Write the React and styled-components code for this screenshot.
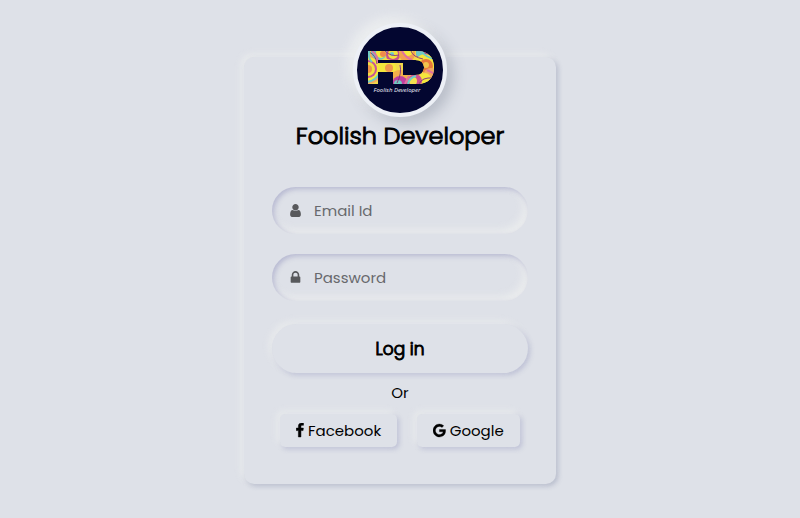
import styled, { createGlobalStyle, css } from "styled-components";

const GlobalStyle = createGlobalStyle`
  * {
    box-sizing: border-box;
  }
  body {
    margin: 0;
    background-color: #dee1e8;
    font-family: Poppins, Inter, sans-serif;
    font-size: 15px;
    color: #000;
  }
`;

const raised = css`
  box-shadow:
    -3px -3px 7px rgba(240, 242, 240, 0.6),
    2px 2px 5px rgba(110, 112, 170, 0.3);
`;

const heavy = css`
  font-weight: 300;
  -webkit-text-stroke: 1px currentColor;
`;

const Page = styled.main`
  display: flex;
  justify-content: center;
  padding: 57px 16px 34px;
`;

const Card = styled.form`
  display: flex;
  flex-direction: column;
  align-items: center;
  width: 100%;
  max-width: 312px;
  padding: 0 28px 37px;
  border-radius: 10px;
  box-shadow:
    -3px -3px 7px rgba(240, 242, 240, 0.6),
    2px 2px 5px rgba(94, 104, 140, 0.32);
`;

const Avatar = styled.div`
  width: 94px;
  height: 94px;
  margin-top: -34px;
  border: 4px solid #edf0f6;
  border-radius: 50%;
  overflow: hidden;
  background-color: #030630;
  box-shadow:
    -6px -6px 12px rgba(244, 245, 244, 0.7),
    6px 6px 14px rgba(94, 104, 121, 0.3);
  svg {
    display: block;
  }
`;

const Title = styled.h1`
  margin: 0 0 32px;
  font-size: 24px;
  line-height: 38px;
  white-space: nowrap;
  ${heavy}
`;

const Field = styled.label`
  display: flex;
  align-items: center;
  gap: 11px;
  width: 100%;
  height: 47px;
  margin-bottom: 20px;
  padding: 0 16px;
  border-radius: 24px;
  color: #58595c;
  box-shadow:
    inset 2px 2px 5px rgba(110, 112, 170, 0.36),
    inset -4px -4px 9px rgba(240, 242, 240, 0.75);
`;

const Input = styled.input`
  flex: 1;
  min-width: 0;
  padding: 0;
  border: none;
  outline: none;
  background: none;
  font-family: inherit;
  font-size: 15px;
  color: #222;
  &::placeholder {
    color: #68696d;
    opacity: 1;
  }
`;

const Icon = styled.svg`
  flex: none;
  height: 15px;
  fill: currentColor;
`;

const Button = styled.button`
  border: none;
  background: none;
  color: inherit;
  font-family: inherit;
  cursor: pointer;
  ${raised}
`;

const LoginButton = styled(Button)`
  width: 100%;
  height: 49px;
  margin-top: 3px;
  border-radius: 25px;
  font-size: 17px;
  ${heavy}
`;

const Or = styled.div`
  line-height: 40px;
`;

const Social = styled.div`
  display: flex;
  gap: 20px;
  margin-top: 1px;
`;

const SocialButton = styled(Button)`
  display: flex;
  align-items: center;
  gap: 4px;
  height: 33px;
  padding: 0 16px;
  border-radius: 5px;
  font-size: 15px;
`;

const UserIcon = () => (
  <Icon viewBox="0 0 1792 1792" aria-hidden="true">
    <path d="M1536 1399q0 109-62.5 187t-150.5 78h-854q-88 0-150.5-78t-62.5-187q0-85 8.5-160.5t31.5-152 58.5-131 94-89 134.5-34.5q131 128 313 128t313-128q76 0 134.5 34.5t94 89 58.5 131 31.5 152 8.5 160.5zm-256-887q0 159-112.5 271.5t-271.5 112.5-271.5-112.5-112.5-271.5 112.5-271.5 271.5-112.5 271.5 112.5 112.5 271.5z" />
  </Icon>
);

const LockIcon = () => (
  <Icon viewBox="0 0 1792 1792" aria-hidden="true">
    <path d="M640 768h512v-192q0-106-75-181t-181-75-181 75-75 181v192zm832 96v576q0 40-28 68t-68 28h-960q-40 0-68-28t-28-68v-576q0-40 28-68t68-28h32v-192q0-184 132-316t316-132 316 132 132 316v192h32q40 0 68 28t28 68z" />
  </Icon>
);

const FacebookIcon = () => (
  <Icon viewBox="449 0 924 1792" aria-hidden="true">
    <path
      d="M1343 12v264h-157q-86 0-116 36t-30 108v189h293l-39 296h-254v759h-306v-759h-255v-296h255v-218q0-186 104-288.5t277-102.5q147 0 228 12z"
      stroke="currentColor"
      strokeWidth="60"
    />
  </Icon>
);

const GoogleIcon = () => (
  <Icon viewBox="128 0 1505 1792" aria-hidden="true">
    <path
      d="M896 786h725q12 67 12 128 0 217-91 387.5t-259.5 266.5-386.5 96q-157 0-299-60.5t-245-163.5-163.5-245-60.5-299 60.5-299 163.5-245 245-163.5 299-60.5q300 0 515 201l-209 201q-123-119-306-119-129 0-238.5 65t-173.5 176.5-64 243.5 64 243.5 173.5 176.5 238.5 65q87 0 160-24t120-60 82-82 51.5-87 22.5-78h-436v-264z"
      stroke="currentColor"
      strokeWidth="40"
    />
  </Icon>
);

// swirl of coloured rings, [cx, cy, r, colour], painted in order
const swirls = [
  [11, 42, 15, "#f0a860"],
  [11, 42, 12, "#f4ea3a"],
  [11, 42, 9, "#c8549a"],
  [11, 42, 7, "#f2e040"],
  [11, 42, 4, "#ee9448"],
  [22, 25, 8, "#6cc8c0"],
  [24, 26, 5, "#f4ea3a"],
  [26, 27, 3, "#ee8a4c"],
  [36, 28, 7, "#c8508c"],
  [36, 27, 5, "#f2e23c"],
  [35, 27, 2, "#6ccdd0"],
  [30, 41, 9, "#f4e63c"],
  [32, 41, 4, "#f0964c"],
  [43, 55, 12, "#f2b04a"],
  [43, 57, 8, "#c040a0"],
  [41, 57, 4, "#70c8c0"],
  [50, 27, 8, "#f2a050"],
  [51, 24, 5, "#f4ea3a"],
  [65, 26, 6, "#a04c90"],
  [63, 26, 4, "#70c9c4"],
  [68, 37, 10, "#f4e63c"],
  [69, 39, 7, "#e8783c"],
  [69, 38, 3, "#f2c44c"],
  [74, 49, 8, "#f0a860"],
  [68, 52, 6, "#f4e63c"],
  [58, 54, 7, "#d0508e"],
  [56, 54, 4, "#f4e050"],
];

const Logo = () => (
  <svg width="86" height="86" viewBox="0 0 86 86" role="img" aria-label="FD logo">
    <defs>
      <clipPath id="fd">
        <path
          clipRule="evenodd"
          d="M11 24H60C72 24 77 31 77 40.5S72 57 60 57H36V45H21V57H11ZM21 33V36H46V48H58C64 48 67 45 67 40.5S64 33 58 33Z"
        />
      </clipPath>
    </defs>
    <g clipPath="url(#fd)">
      <rect width="86" height="86" fill="#f2d84a" />
      {swirls.map(([cx, cy, r, fill], i) => (
        <circle key={i} cx={cx} cy={cy} r={r} fill={fill} />
      ))}
      <path d="M12 25q7 3 8 12M28 24q6 6 14 4M43 38q2 8-3 18M54 24q2 6 12 8M62 57q3-7 14-6" fill="none" stroke="#8c3c80" />
      <path d="M10 55q8-1 12-8M12 24q-1 8 3 11M65 25q4 5 12 7M51 57q1-6 8-8" fill="none" stroke="#6cccc8" strokeWidth="2" />
      <path d="M15 24q6 4 6 12M45 24q4 7 10 9M70 43l8 4M52 49l-4 8" fill="none" stroke="#e070a0" strokeWidth="2" />
    </g>
    <text
      x="40"
      y="65"
      textAnchor="middle"
      fill="#e4e5f2"
      fontFamily="'Noto Sans', sans-serif"
      fontSize="6"
      fontStyle="italic"
    >
      Foolish Developer
    </text>
  </svg>
);

const App = () => {
  return (
    <>
      <GlobalStyle />
      <Page>
        <Card onSubmit={(e) => e.preventDefault()}>
          <Avatar>
            <Logo />
          </Avatar>
          <Title>Foolish Developer</Title>
          <Field>
            <UserIcon />
            <Input type="email" placeholder="Email Id" aria-label="Email Id" />
          </Field>
          <Field>
            <LockIcon />
            <Input type="password" placeholder="Password" aria-label="Password" />
          </Field>
          <LoginButton type="submit">Log in</LoginButton>
          <Or>Or</Or>
          <Social>
            <SocialButton type="button">
              <FacebookIcon />
              Facebook
            </SocialButton>
            <SocialButton type="button">
              <GoogleIcon />
              Google
            </SocialButton>
          </Social>
        </Card>
      </Page>
    </>
  );
};

export default App;
